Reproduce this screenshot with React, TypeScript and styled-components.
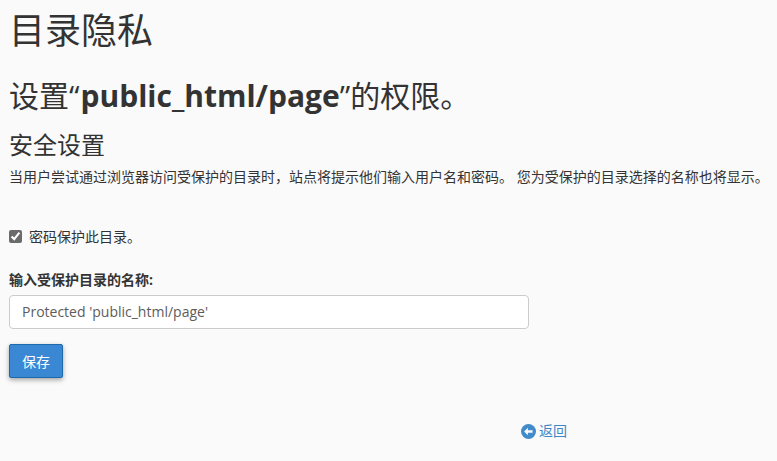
import React from "react";
import styled, { createGlobalStyle } from "styled-components";

const Global = createGlobalStyle`
  html, body {
    margin: 0;
    padding: 0;
    background: #fafafa;
    color: #333333;
    font-family: "Open Sans", "Noto Sans CJK SC", sans-serif;
    font-size: 14px;
  }
`;

const Page = styled.div`
  width: 777px;
  height: 461px;
  overflow: hidden;
  box-sizing: border-box;
  padding: 0 9px;
`;

const Title = styled.h1`
  margin: 10px 0 0;
  font-size: 36px;
  line-height: 42px;
  font-weight: 400;
`;

const SubTitle = styled.h2`
  margin: 26px 0 0;
  font-size: 30px;
  line-height: 36px;
  font-weight: 400;
  white-space: nowrap;
`;

const DirName = styled.b`
  margin-left: 1px;
`;

const Section = styled.h3`
  margin: 16px 0 0;
  font-size: 24px;
  line-height: 30px;
  font-weight: 400;
`;

const Help = styled.p`
  margin: 8px 0 0;
  font-size: 14px;
  line-height: 18px;
  white-space: nowrap;
`;

const CheckRow = styled.label`
  display: flex;
  align-items: center;
  gap: 7px;
  margin-top: 40px;
  height: 20px;
`;

const Check = styled.input`
  margin: 1px 0 0;
  width: 13px;
  height: 13px;
  accent-color: #6b6b6b;
`;

const FieldLabel = styled.label`
  display: block;
  margin-top: 24px;
  font-weight: 700;
  line-height: 20px;
`;

const TextInput = styled.input`
  display: block;
  box-sizing: border-box;
  margin-top: 5px;
  width: 520px;
  height: 34px;
  padding: 0 12px 2px;
  border: 1px solid #cccccc;
  border-radius: 4px;
  background: #ffffff;
  color: #5c5c5c;
  font: 14px "Open Sans", sans-serif;
`;

const SaveButton = styled.button`
  display: block;
  margin-top: 15px;
  width: 54px;
  height: 34px;
  padding: 0;
  border: 1px solid #1e69ab;
  border-radius: 2px;
  background: #3a87d3;
  color: #ffffff;
  box-shadow: 0 2px 5px rgba(0, 0, 0, 0.35);
  font: 14px "Open Sans", "Noto Sans CJK SC", sans-serif;
`;

const BackRow = styled.div`
  display: flex;
  margin-top: 44px;
  padding-left: 512px;
`;

const BackLink = styled.a`
  display: inline-flex;
  align-items: center;
  gap: 3px;
  color: #3f86c6;
  font-size: 14px;
  line-height: 18px;
`;

export default function App() {
  return (
    <Page>
      <Global />
      <Title>目录隐私</Title>
      <SubTitle>
        设置“<DirName>public_html/page</DirName>”的权限。
      </SubTitle>
      <Section>安全设置</Section>
      <Help>当用户尝试通过浏览器访问受保护的目录时，站点将提示他们输入用户名和密码。 您为受保护的目录选择的名称也将显示。</Help>
      <CheckRow>
        <Check type="checkbox" defaultChecked />
        密码保护此目录。
      </CheckRow>
      <FieldLabel>输入受保护目录的名称:</FieldLabel>
      <TextInput defaultValue="Protected 'public_html/page'" />
      <SaveButton>保存</SaveButton>
      <BackRow>
        <BackLink>
          <svg width="15" height="15" viewBox="0 0 24 24">
            <circle cx="12" cy="12" r="12" fill="#428bca" />
            <path d="M5 12l6-6v4h7.500v4H11v4z" fill="#fafafa" />
          </svg>
          返回
        </BackLink>
      </BackRow>
    </Page>
  );
}
